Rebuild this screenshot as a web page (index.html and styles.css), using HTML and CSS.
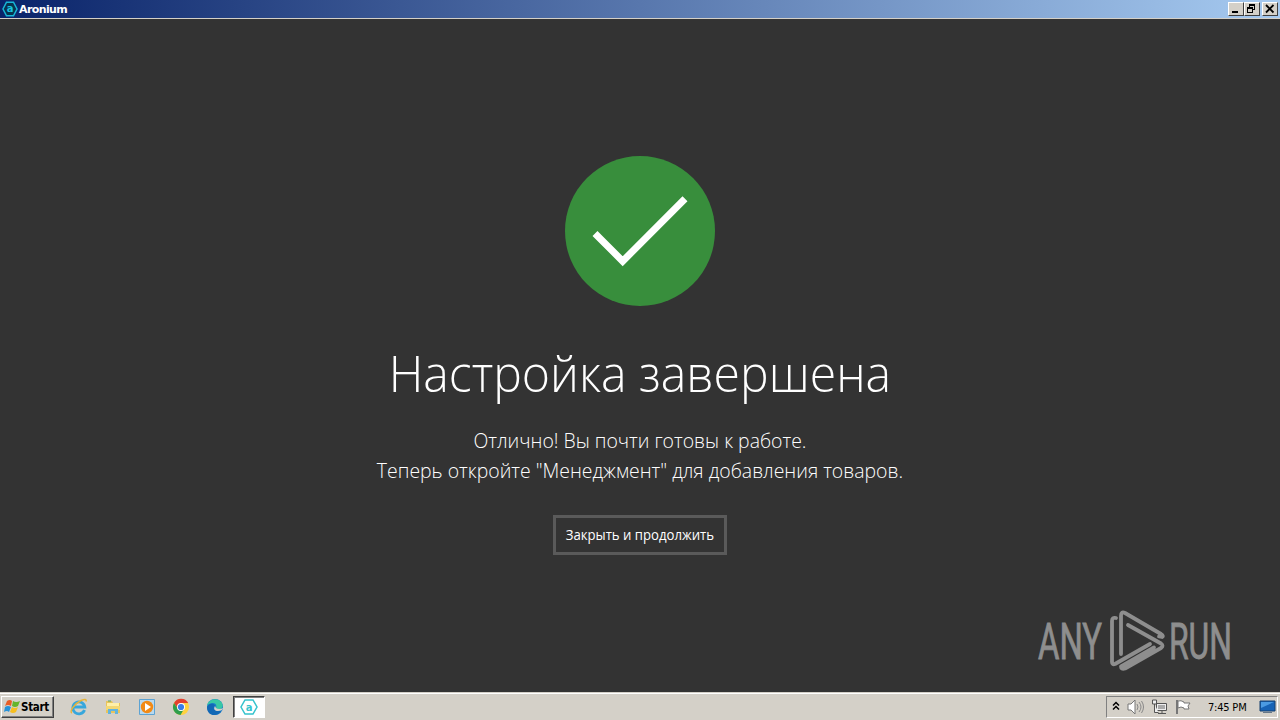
FILE: index.html
```
<!DOCTYPE html>
<html lang="ru">
<head>
<meta charset="utf-8">
<title>Aronium</title>
<link rel="stylesheet" href="styles.css">
</head>
<body>
<div class="desktop">
  <header class="titlebar">
    <svg class="app-icon" width="16" height="16" viewBox="0 0 16 16"><path d="M4.500 1.200h7L15 8l-3.500 6.800h-7L1 8z" fill="#07334f" stroke="#18b6d6" stroke-width="1.500"/><text x="8" y="11.300" text-anchor="middle" class="logo-letter">a</text></svg>
    <span class="app-name">Aronium</span>
    <div class="window-buttons">
      <svg class="win-btn" width="16" height="14" viewBox="1 1 14 12"><path d="M4 9h6v2H4z"/></svg>
      <svg class="win-btn" width="16" height="14" viewBox="1 1 14 12"><path d="M5 2h6v6H9V7h1V4H6v1H5zM3 5h6v6H3zM4 7v3h4V7z" fill-rule="evenodd"/></svg>
      <svg class="win-btn close" width="16" height="14" viewBox="1 1 14 12"><path d="M4 3l7.500 7.500M11.500 3L4 10.500" stroke="#000" stroke-width="1.800"/></svg>
    </div>
  </header>
  <main class="content">
    <svg class="success" width="150" height="150" viewBox="0 0 150 150"><circle cx="75" cy="75" r="75" fill="#388e3c"/><path d="M30 77.500l27.700 27.700L120 42.800" fill="none" stroke="#fff" stroke-width="7"/></svg>
    <h1 class="title"><span>Настройка завершена</span></h1>
    <p class="message"><span class="line-one">Отлично! Вы почти готовы к работе.</span><span class="line-two">Теперь откройте "Менеджмент" для добавления товаров.</span></p>
    <button class="continue"><span>Закрыть и продолжить</span></button>
    <svg class="watermark" width="210" height="70" viewBox="0 0 210 70">
      <g class="brand"><text transform="translate(4 54) scale(1 1.440)" textLength="64" lengthAdjust="spacingAndGlyphs">ANY</text><text transform="translate(135 54) scale(1 1.440)" textLength="63" lengthAdjust="spacingAndGlyphs">RUN</text></g>
      <g fill="none" stroke="#8e8e8e" stroke-width="3.800" stroke-linejoin="round" stroke-linecap="round"><path d="M82 13q-4-1-4 3v41q0 3 3 2l35-20"/><path d="M87 49V11q0-5 4-3l36 21q3 2 1 3l-3-.5"/><path d="M94 20l33 18.500q3 2 0 4.500L91 63.500q-4 1-4-2l33-19"/></g>
    </svg>
  </main>
  <footer class="taskbar">
    <div class="start"><svg width="17" height="16" viewBox="0 0 17 16"><path d="M3 2q3-2 5 0L7 7Q4 5 1 7z" fill="#e85d25"/><path d="M9 2q3 2 7 0l-2 5q-3 2-6 0z" fill="#65b52b"/><path d="M1 8q3-2 6 0l-2 5q-2-2-5 0z" fill="#2792d8"/><path d="M8 8q3 2 6 0l-2 5q-3 2-6 0z" fill="#f7bf20"/></svg><span>Start</span></div>
    <div class="shortcuts">
      <svg width="18" height="18" viewBox="0 0 18 18"><path d="M14.500 12a6 6 0 1 1 .3-3H4" fill="none" stroke="#37a7dc" stroke-width="2.800"/><path d="M2 15C-1 14 4 6 11 2.500q6-2.500 5 1" fill="none" stroke="#e7b43b" stroke-width="1.500"/></svg>
      <svg width="18" height="18" viewBox="0 0 18 18"><path d="M2 3h6l1 2h7v10H2z" fill="#e8c45c"/><path d="M3 5h12v5H3z" fill="#fff0a8"/><path d="M2 8h14v4H2z" fill="#f3d874"/><path d="M4 16v-5h10v5h-3v-3H7v3z" fill="#61b4df"/><path d="M4 3h3" stroke="#53a567"/></svg>
      <svg width="18" height="18" viewBox="0 0 18 18"><path d="M1.500 1.500h15v15h-15z" fill="#b9d9ef" stroke="#5da3d3"/><circle cx="9" cy="9" r="6.200" fill="#f28a16"/><path d="M7 5l6 4-6 4z" fill="#fff"/></svg>
      <svg width="18" height="18" viewBox="0 0 18 18"><circle cx="9" cy="9" r="8" fill="#ffd23f"/><path d="M2 5a8 8 0 0 1 14.200 0H9L6 11z" fill="#e3402f"/><path d="M2 5a8 8 0 0 0 6.500 12l3.500-6H6z" fill="#2f9e4c"/><circle cx="9" cy="9" r="4" fill="#fff"/><circle cx="9" cy="9" r="3.100" fill="#397de8"/></svg>
      <svg width="18" height="18" viewBox="0 0 18 18"><circle cx="9" cy="9" r="8" fill="#187bc9"/><path d="M1 8C2 0 13-1 16 5c3 7-5 7-6 5 2-5-5-7-9-2z" fill="#39c8a5"/><path d="M1 9c2-4 7-4 8-1-3 2-1 6 6 5-3 6-14 6-14-4z" fill="#1268b5"/><path d="M9 8c-3 5 3 6 7 4l1-2q-4 2-7 0z" fill="#d4d0c8"/></svg>
      <div class="active-task"><svg width="18" height="18" viewBox="0 0 18 18"><path d="M5 2h8l4 7-4 7H5L1 9z" fill="#fff" stroke="#35c3cd" stroke-width="1.500"/><text x="9" y="12.600" text-anchor="middle" class="task-letter">a</text></svg></div>
    </div>
    <div class="tray">
      <svg width="8" height="14" viewBox="0 0 8 14"><path d="M1 5.500l3-3 3 3M1 9.500l3-3 3 3" fill="none" stroke="#000" stroke-width="1.500"/></svg>
      <svg width="17" height="16" viewBox="0 0 17 16"><path d="M1 5h3l4-4v14l-4-4H1z" fill="#fff" stroke="#777"/><path d="M10 5q2 3 0 6M12 3q4 5 0 10M14.500 2q4 6 0 12" fill="none" stroke="#888"/></svg>
      <svg width="17" height="16" viewBox="0 0 17 16"><path d="M5.500 4.500h10v7h-10zM7 14.500h8M11 12v3" fill="#eee" stroke="#555"/><path d="M7 6h7v4H7z" fill="#aaa"/><path d="M1.500 1v4h4V1zM3.500 5v8.500h4" fill="#eee" stroke="#555"/></svg>
      <svg width="17" height="16" viewBox="0 0 17 16"><path d="M2 1v14" stroke="#777" stroke-width="2"/><path d="M3 2q3-1 6 1v1h6l-2 3 1 3H9V9q-3-2-6 0z" fill="#fff" stroke="#777"/></svg>
      <span class="clock">7:45 PM</span>
      <svg class="show-desktop" width="17" height="14" viewBox="0 0 17 14"><path d="M1 1h15v10H1z" fill="#1763b5" stroke="#17406f"/><path d="M2 2h13L2 8z" fill="#4b9be2"/><path d="M4 12h9v1H4z" fill="#678"/></svg>
    </div>
  </footer>
</div>
</body>
</html>
```
FILE: styles.css
```
* { box-sizing: border-box; }
body { margin: 0; overflow: hidden; }
.desktop { width: 1280px; height: 720px; display: flex; flex-direction: column; background: #333; }
.titlebar { height: 19px; flex: none; display: flex; align-items: flex-start; padding: 1px 2px 0; background: linear-gradient(90deg, #0a246a, #a6caf0); border-bottom: 1px solid #d4d0c8; }
.logo-letter { font: bold 10px "DejaVu Sans", sans-serif; fill: #18c3df; }
.app-name { margin-left: 1px; padding-top: 1px; font: bold 11px/15px "DejaVu Sans", sans-serif; color: #fff; letter-spacing: -.6px; }
.window-buttons { margin: 1px 0 0 auto; display: flex; }
.win-btn { background: #d4d0c8; border: 1px solid; border-color: #fff #404040 #404040 #fff; }
.close { margin-left: 2px; }
.content { flex: 1; position: relative; display: flex; flex-direction: column; align-items: center; padding-top: 137px; color: #fff; font-family: "Open Sans", sans-serif; }
.success { flex: none; }
.title { margin: 32px 0 0; height: 70px; font-size: 50px; line-height: 70px; font-weight: 300; white-space: nowrap; }
.title span { display: block; transform: scaleX(.963); }
.message { margin: 18px 0 0; display: flex; flex-direction: column; align-items: center; font-size: 20px; line-height: 30px; font-weight: 300; white-space: nowrap; transform: scaleX(.971); }
.continue { margin: 29px 0 0; width: 174px; height: 40px; padding: 0 0 2px; display: flex; align-items: center; justify-content: center; background: #333; border: 3px solid #5a5a5a; color: #fff; font: 14px "Open Sans", sans-serif; white-space: nowrap; }
.continue span { transform: scaleX(.94); }
.watermark { position: absolute; right: 36px; bottom: 17px; }
.brand { font: 35px "Roboto", sans-serif; fill: #8e8e8e; stroke: #8e8e8e; stroke-width: .6px; }
.taskbar { height: 28px; flex: none; display: flex; align-items: center; background: #d4d0c8; border-top: 1px solid #d4d0c8; box-shadow: inset 0 1px #fff; padding: 1px 2px 0 1px; }
.start { width: 53px; height: 22px; display: flex; align-items: center; padding-left: 2px; border: 1px solid; border-color: #fff #404040 #404040 #fff; box-shadow: inset -1px -1px #808080; font: bold 11.5px "DejaVu Sans Condensed", "DejaVu Sans", sans-serif; }
.start span { letter-spacing: -.3px; }
.shortcuts { display: flex; align-items: center; gap: 16px; margin-left: 16px; }
.active-task { width: 32px; height: 22px; margin-left: -7px; display: flex; align-items: center; justify-content: center; background: #fff; border: 1px solid; border-color: #404040 #fff #fff #404040; box-shadow: inset 1px 1px #808080; }
.task-letter { font: bold 10px "DejaVu Sans", sans-serif; fill: #35c3cd; }
.tray { width: 172px; height: 22px; margin-left: auto; display: flex; align-items: center; padding: 0 1px 0 5px; gap: 7px; border: 1px solid; border-color: #808080 #fff #fff #808080; }
.tray svg { flex: none; }
.clock { width: 42px; margin-left: 9px; font: 11px "DejaVu Sans Condensed", sans-serif; letter-spacing: -.2px; white-space: nowrap; }
.show-desktop { margin-left: auto; }
```
